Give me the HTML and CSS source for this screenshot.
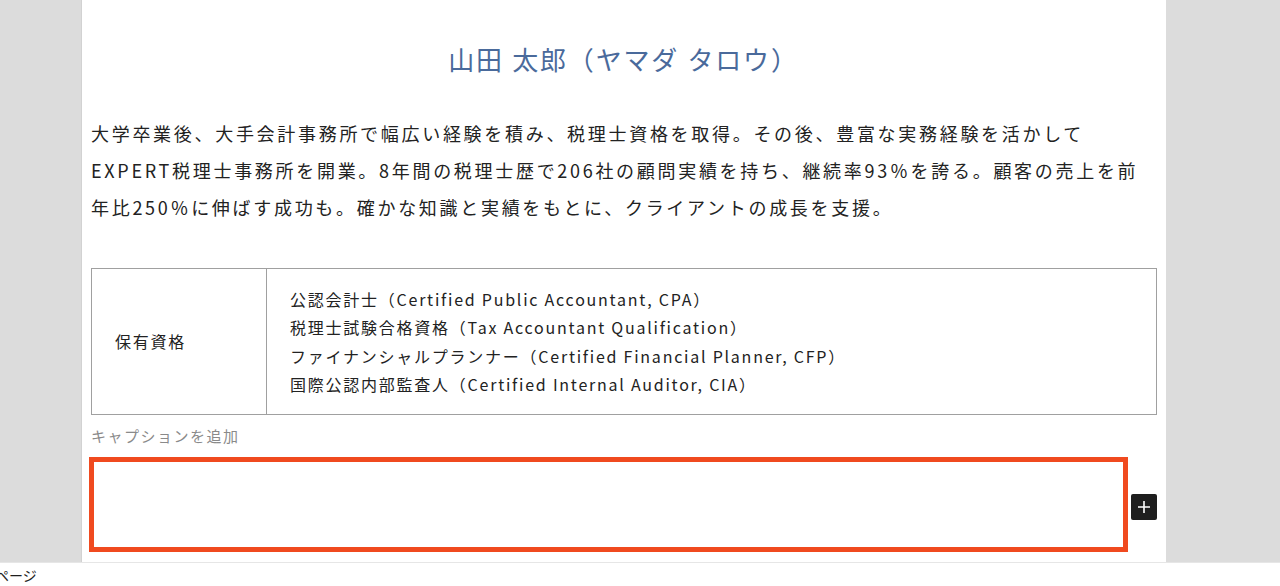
FILE: index.html
```html
<!DOCTYPE html>
<html lang="ja">
<head>
<meta charset="utf-8">
<link rel="stylesheet" href="styles.css">
</head>
<body>
<div class="editor">
  <div class="canvas">
    <h2 class="name">山田 太郎（ヤマダ タロウ）</h2>
    <p class="bio">大学卒業後、大手会計事務所で幅広い経験を積み、税理士資格を取得。その後、豊富な実務経験を活かしてEXPERT税理士事務所を開業。8年間の税理士歴で206社の顧問実績を持ち、継続率93％を誇る。顧客の売上を前年比250％に伸ばす成功も。確かな知識と実績をもとに、クライアントの成長を支援。</p>
    <table class="quals">
      <tr>
        <th>保有資格</th>
        <td>公認会計士（Certified Public Accountant, CPA）<br>税理士試験合格資格（Tax Accountant Qualification）<br>ファイナンシャルプランナー（Certified Financial Planner, CFP）<br>国際公認内部監査人（Certified Internal Auditor, CIA）</td>
      </tr>
    </table>
    <div class="caption">キャプションを追加</div>
    <div class="new-block">
      <div class="block-box"></div>
      <button class="add-btn" aria-label="ブロックを追加"><svg width="14" height="14" viewBox="0 0 14 14"><path d="M7 1v12M1 7h12" stroke="#fff" stroke-width="1.6"/></svg></button>
    </div>
  </div>
</div>
<div class="footer"><span class="crumb">ページ</span></div>
</body>
</html>
```
FILE: styles.css
```css
html, body {
  margin: 0;
  padding: 0;
  background: #fff;
  font-family: "Noto Sans CJK JP", "Noto Sans", sans-serif;
}
.editor {
  height: 562px;
  background: #dcdcdc;
  display: flex;
  overflow: hidden;
}
.canvas {
  margin-left: 81px;
  border-left: 1px solid #d2d2d2;
  width: 1085px;
  background: #fff;
  box-sizing: border-box;
  padding: 44px 9px 0 9px;
  color: #222;
}
.name {
  margin: 0;
  text-align: center;
  font-family: "Liberation Serif", "Noto Sans CJK JP", serif;
  font-weight: 400;
  font-size: 26px;
  line-height: 36px;
  color: #4a6a9b;
  letter-spacing: 0.07em;
  padding-right: 1px;
}
.bio {
  margin: 35px 0 0 0;
  font-size: 18px;
  line-height: 37px;
  letter-spacing: 0.15em;
}
.quals {
  margin-top: 42px;
  width: 100%;
  border-collapse: collapse;
  font-size: 16px;
  letter-spacing: 0.11em;
}
.quals th, .quals td {
  border: 1px solid #a0a0a0;
  padding: 16px 23px;
  text-align: left;
  font-weight: 400;
  line-height: 28.3px;
  vertical-align: middle;
}
.quals th {
  width: 128px;
}
.caption {
  margin-top: 10px;
  font-size: 15px;
  line-height: 22px;
  color: #8a8a8a;
  letter-spacing: 0.1em;
}
.new-block {
  margin: 10px 0 0 -2px;
  display: flex;
  align-items: center;
  gap: 3px;
}
.block-box {
  width: 1040px;
  height: 95px;
  box-sizing: border-box;
  border: 5px solid #f04a1f;
}
.add-btn {
  width: 26px;
  height: 26px;
  margin-top: 4px;
  padding: 0;
  border: none;
  border-radius: 2px;
  background: #1e1e1e;
  display: flex;
  align-items: center;
  justify-content: center;
}
.footer {
  border-top: 1px solid #e6e6e6;
  height: 23px;
  font-size: 14px;
  line-height: 24px;
  color: #1e1e1e;
  overflow: hidden;
}
.crumb {
  margin-left: -5px;
}
```
